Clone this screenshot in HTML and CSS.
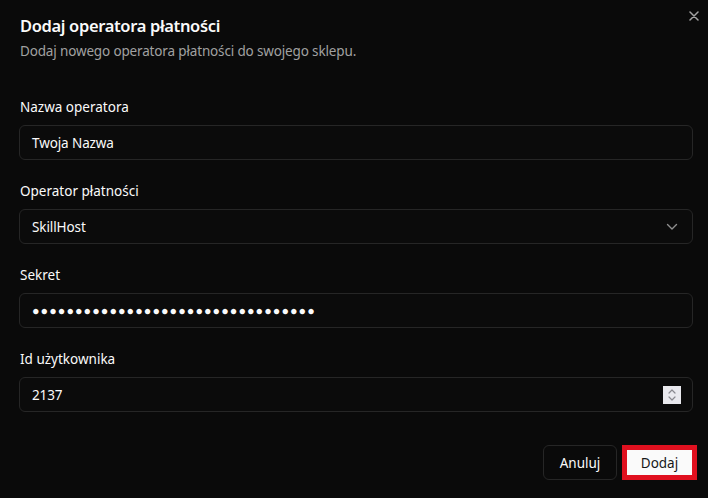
FILE: index.html
```html
<!DOCTYPE html>
<html lang="pl">
<head>
    <meta charset="UTF-8">
    <meta name="viewport" content="width=device-width, initial-scale=1.0">
    <title>Dodaj operatora płatności</title>
    <link rel="stylesheet" href="styles.css">
</head>
<body>
    <div class="dialog">
        <button class="close" type="button" aria-label="Zamknij">
            <svg width="10" height="10" viewBox="0 0 10 10"><path d="M1 1L9 9M9 1L1 9" stroke="currentColor" stroke-width="1.5" stroke-linecap="round"/></svg>
        </button>
        <div class="header">
            <h2 class="title">Dodaj operatora płatności</h2>
            <p class="subtitle">Dodaj nowego operatora płatności do swojego sklepu.</p>
        </div>

        <div class="fields">
            <div class="field">
                <label class="label">Nazwa operatora</label>
                <div class="input">Twoja Nazwa</div>
            </div>
            <div class="field">
                <label class="label">Operator płatności</label>
                <div class="input select">
                    <span>SkillHost</span>
                    <svg class="chevron" width="12" height="8" viewBox="0 0 12 8"><path d="M1.5 1.5L6 6L10.5 1.5" fill="none" stroke="currentColor" stroke-width="1.4" stroke-linecap="round" stroke-linejoin="round"/></svg>
                </div>
            </div>
            <div class="field">
                <label class="label">Sekret</label>
                <div class="input secret">●●●●●●●●●●●●●●●●●●●●●●●●●●●●●●●●●</div>
            </div>
            <div class="field">
                <label class="label">Id użytkownika</label>
                <div class="input number">
                    <span>2137</span>
                    <div class="spinner">
                        <svg width="10" height="14" viewBox="0 0 10 14"><path d="M2 5L5 2L8 5M2 9L5 12L8 9" fill="none" stroke="#8a8a90" stroke-width="1.2" stroke-linecap="round" stroke-linejoin="round"/></svg>
                    </div>
                </div>
            </div>
        </div>

        <div class="footer">
            <button class="btn btn-outline" type="button">Anuluj</button>
            <button class="btn btn-primary" type="submit">Dodaj</button>
        </div>
    </div>
</body>
</html>
```

FILE: styles.css
```css
body{
    margin:0;
    padding:0;
    background-color:#0a0a0a;
    color:#fafafa;
    font-family:"Noto Sans","Open Sans",sans-serif;
}
.dialog{
    position:relative;
    width:708px;
    height:498px;
    box-sizing:border-box;
    padding:12px 15px 0 19px;
}
.close{
    position:absolute;
    top:10px;
    right:8px;
    background:none;
    border:none;
    color:#a3a3a3;
    padding:0;
    width:12px;
    height:12px;
    display:flex;
    align-items:center;
    justify-content:center;
}
.header{
    padding-left:1px;
}
.title{
    margin:0;
    font-size:16.5px;
    font-weight:600;
    line-height:28px;
    letter-spacing:-0.35px;
}
.subtitle{
    margin:1px 0 0;
    font-size:13.5px;
    line-height:20px;
    color:#a1a1a1;
    letter-spacing:-0.15px;
}
.fields{
    display:flex;
    flex-direction:column;
    gap:21px;
    margin-top:36px;
}
.field{
    display:flex;
    flex-direction:column;
    gap:8px;
}
.label{
    font-size:13.5px;
    line-height:20px;
    font-weight:400;
    padding-left:1px;
}
.input{
    height:35px;
    box-sizing:border-box;
    border:1px solid #262626;
    border-radius:6px;
    background-color:#0b0b0b;
    padding:0 12px;
    display:flex;
    align-items:center;
    justify-content:space-between;
    font-size:13.5px;
    letter-spacing:-0.1px;
}
.chevron{
    color:#8f8f8f;
    margin-right:2px;
}
.secret{
    font-size:12.5px;
    letter-spacing:1.05px;
    justify-content:flex-start;
}
.spinner{
    width:18px;
    height:18px;
    background-color:#e9e9ee;
    display:flex;
    align-items:center;
    justify-content:center;
    margin-right:-1px;
}
.footer{
    display:flex;
    justify-content:flex-end;
    gap:5px;
    margin-top:33px;
    margin-right:-4px;
}
.btn{
    height:35px;
    box-sizing:border-box;
    border-radius:6px;
    font-family:inherit;
    font-size:13.5px;
    padding:0;
    cursor:pointer;
}
.btn-outline{
    width:74px;
    background-color:#0a0a0a;
    color:#fafafa;
    border:1px solid #262626;
}
.btn-primary{
    width:75px;
    background-color:#fafafa;
    color:#171717;
    border:none;
    outline:5px solid #e0101f;
    outline-offset:-5px;
    border-radius:0;
}
```
